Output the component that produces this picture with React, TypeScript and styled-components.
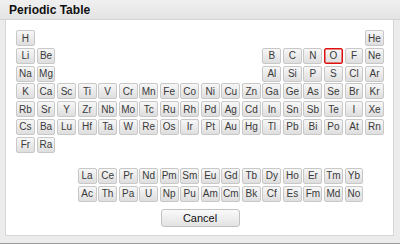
import React, { useState } from 'react';
import styled, { createGlobalStyle } from 'styled-components';

const MAIN: string[][] = [
  ['H', '', '', '', '', '', '', '', '', '', '', '', '', '', '', '', '', 'He'],
  ['Li', 'Be', '', '', '', '', '', '', '', '', '', '', 'B', 'C', 'N', 'O', 'F', 'Ne'],
  ['Na', 'Mg', '', '', '', '', '', '', '', '', '', '', 'Al', 'Si', 'P', 'S', 'Cl', 'Ar'],
  ['K', 'Ca', 'Sc', 'Ti', 'V', 'Cr', 'Mn', 'Fe', 'Co', 'Ni', 'Cu', 'Zn', 'Ga', 'Ge', 'As', 'Se', 'Br', 'Kr'],
  ['Rb', 'Sr', 'Y', 'Zr', 'Nb', 'Mo', 'Tc', 'Ru', 'Rh', 'Pd', 'Ag', 'Cd', 'In', 'Sn', 'Sb', 'Te', 'I', 'Xe'],
  ['Cs', 'Ba', 'Lu', 'Hf', 'Ta', 'W', 'Re', 'Os', 'Ir', 'Pt', 'Au', 'Hg', 'Tl', 'Pb', 'Bi', 'Po', 'At', 'Rn'],
  ['Fr', 'Ra'],
];

const F_BLOCK: string[][] = [
  ['La', 'Ce', 'Pr', 'Nd', 'Pm', 'Sm', 'Eu', 'Gd', 'Tb', 'Dy', 'Ho', 'Er', 'Tm', 'Yb'],
  ['Ac', 'Th', 'Pa', 'U', 'Np', 'Pu', 'Am', 'Cm', 'Bk', 'Cf', 'Es', 'Fm', 'Md', 'No'],
];

const GlobalStyle = createGlobalStyle`
  html, body {
    margin: 0;
    padding: 0;
    background: #ececec;
    font-family: "Liberation Sans", Arial, sans-serif;
  }
`;

export default function App() {
  const [selected, setSelected] = useState('O');

  return (
    <>
      <GlobalStyle />
      <Dialog>
        <TitleBar>Periodic Table</TitleBar>
        <Panel>
          <Table>
            {MAIN.map((row, r) =>
              row.map((sym, c) =>
                sym ? (
                  <Element
                    key={sym}
                    $row={r + 1}
                    $col={c + 1}
                    $active={sym === selected}
                    onClick={() => setSelected(sym)}
                  >
                    {sym}
                  </Element>
                ) : null
              )
            )}
          </Table>
          <FBlock>
            {F_BLOCK.map((row, r) =>
              row.map((sym, c) => (
                <Element
                  key={sym}
                  $row={r + 1}
                  $col={c + 4}
                  $active={sym === selected}
                  onClick={() => setSelected(sym)}
                >
                  {sym}
                </Element>
              ))
            )}
          </FBlock>
          <Footer>
            <CancelButton>Cancel</CancelButton>
          </Footer>
        </Panel>
      </Dialog>
    </>
  );
}

const Dialog = styled.div`
  width: 400px;
  height: 244px;
  display: flex;
  flex-direction: column;
  background: #ececec;
  border-bottom: 1px solid #9a9a9a;
  box-sizing: border-box;
`;

const TitleBar = styled.div`
  height: 20px;
  box-sizing: border-box;
  padding: 3px 0 0 9px;
  font-size: 12px;
  font-weight: bold;
  color: #111;
  background: linear-gradient(#f0f0f0, #e4e4e4);
  border-bottom: 1px solid #d2d2d2;
`;

const Panel = styled.div`
  height: 216px;
  margin: 0 6px 0 5px;
  box-sizing: border-box;
  background: #fff;
  border: 1px solid #d6d6d6;
  border-top: none;
  padding: 10px 9px 0 10px;
`;

const Table = styled.div`
  display: grid;
  grid-template-columns: repeat(18, 1fr);
  grid-auto-rows: 16px;
  column-gap: 1.6px;
  row-gap: 1.8px;
  width: 368px;
`;

const FBlock = styled(Table)`
  margin-top: 15px;
`;

const Element = styled.button<{ $row: number; $col: number; $active: boolean }>`
  grid-row: ${(p) => p.$row};
  grid-column: ${(p) => p.$col};
  margin: 0;
  padding: 0;
  box-sizing: border-box;
  font-family: "Liberation Sans", Arial, sans-serif;
  font-size: 10px;
  color: #3a3a3a;
  background: linear-gradient(#f7f7f7, #dedede);
  border: 1px solid ${(p) => (p.$active ? '#e01010' : '#c8c8c8')};
  box-shadow: ${(p) => (p.$active ? 'inset 0 0 0 0.5px #e01010' : 'none')};
  border-radius: 2px;
  cursor: pointer;
`;

const Footer = styled.div`
  display: flex;
  justify-content: center;
  margin-top: 7px;
`;

const CancelButton = styled.button`
  width: 79px;
  height: 18px;
  margin: 0;
  padding: 0;
  font-family: "Liberation Sans", Arial, sans-serif;
  font-size: 11px;
  color: #111;
  background: linear-gradient(#fafafa, #e2e2e2);
  border: 1px solid #c2c2c2;
  border-radius: 3px;
  cursor: pointer;
`;
